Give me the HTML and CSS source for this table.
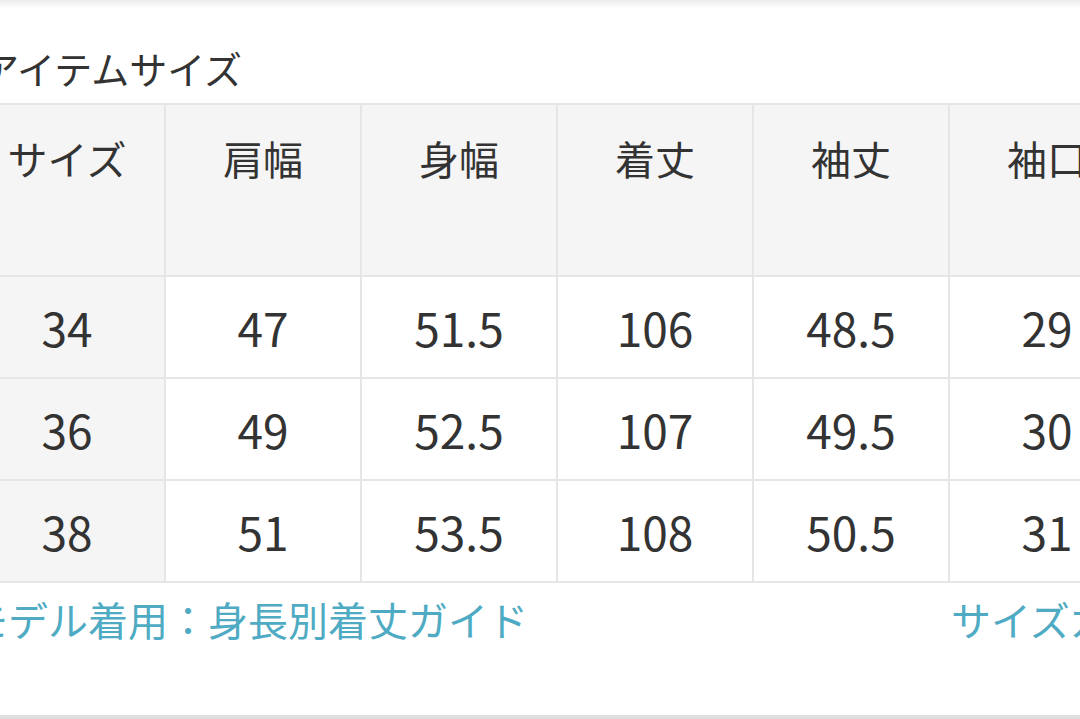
FILE: index.html
```html
<!DOCTYPE html>
<html lang="ja">
<head>
<meta charset="utf-8">
<title>アイテムサイズ</title>
<link rel="stylesheet" href="styles.css">
</head>
<body>
<div class="top-shade"></div>
<div class="page">
  <h2 class="title">アイテムサイズ</h2>
  <table class="size-table">
    <thead>
      <tr>
        <th class="first">サイズ</th>
        <th>肩幅</th>
        <th>身幅</th>
        <th>着丈</th>
        <th>袖丈</th>
        <th>袖口</th>
      </tr>
    </thead>
    <tbody>
      <tr><th class="first">34</th><td>47</td><td>51.5</td><td>106</td><td>48.5</td><td>29</td></tr>
      <tr><th class="first">36</th><td>49</td><td>52.5</td><td>107</td><td>49.5</td><td>30</td></tr>
      <tr><th class="first">38</th><td>51</td><td>53.5</td><td>108</td><td>50.5</td><td>31</td></tr>
    </tbody>
  </table>
  <div class="links">
    <a class="link link-left" href="#">モデル着用：身長別着丈ガイド</a>
    <a class="link link-right" href="#">サイズガイド</a>
  </div>
</div>
<div class="bottom-line"></div>
</body>
</html>
```

FILE: styles.css
```css
html, body {
  margin: 0;
  padding: 0;
  background: #ffffff;
  overflow: hidden;
  width: 1080px;
  height: 719px;
}

body {
  font-family: "Noto Sans CJK JP", "Noto Sans", sans-serif;
  color: #333333;
  position: relative;
}

.top-shade {
  height: 8px;
  background: linear-gradient(#ececec, #ffffff);
}

.page {
  margin-left: -32px;
  width: 1180px;
}

.title {
  margin: 0;
  padding: 41px 0 0 13px;
  font-size: 38px;
  line-height: 38px;
  font-weight: 400;
  color: #333333;
  box-sizing: border-box;
  height: 95px;
}

.size-table {
  border-collapse: collapse;
  table-layout: fixed;
  width: 1178px;
  border: 2px solid #e6e6e6;
}

.size-table th,
.size-table td {
  border: 2px solid #e6e6e6;
  text-align: center;
  padding: 0;
  font-weight: 400;
}

.size-table thead th {
  background: #f5f5f5;
  font-size: 40px;
  line-height: 40px;
  vertical-align: top;
  padding-top: 33px;
  height: 137px;
  box-sizing: content-box;
}

.size-table tbody tr {
  height: 102px;
}

.size-table tbody th,
.size-table tbody td {
  font-size: 46px;
  line-height: 46px;
  vertical-align: middle;
}

.size-table tbody th.first {
  background: #f5f5f5;
}

.size-table tbody td {
  background: #ffffff;
}

.links {
  display: grid;
  grid-template-columns: repeat(4, 196px) 197px 196px;
  padding-top: 16px;
}

.link {
  font-size: 40px;
  line-height: 40px;
  color: #4fabc3;
  text-decoration: none;
  white-space: nowrap;
}

.link-left {
  grid-column: 1 / 6;
  margin-left: 0;
}

.link-right {
  grid-column: 6 / 7;
  margin-left: 2px;
}

.bottom-line {
  position: absolute;
  left: 0;
  right: 0;
  top: 715px;
  height: 4px;
  background: #dedede;
}
```
